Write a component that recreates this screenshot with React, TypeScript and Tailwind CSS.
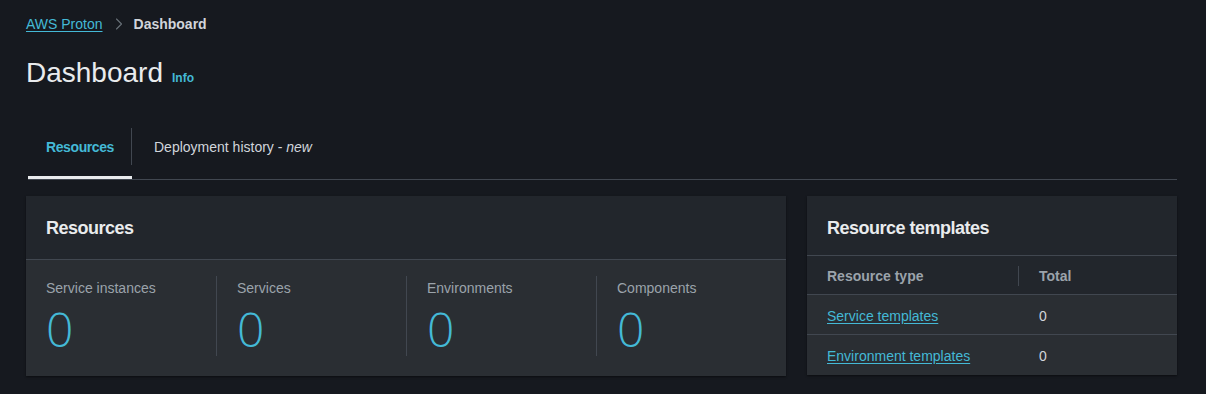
import { ChevronRight } from "lucide-react";

const stats = [
  { label: "Service instances", value: 0 },
  { label: "Services", value: 0 },
  { label: "Environments", value: 0 },
  { label: "Components", value: 0 },
];

const templates = [
  { name: "Service templates", total: 0 },
  { name: "Environment templates", total: 0 },
];

export default function App() {
  return (
    <main
      className="min-h-screen bg-[#16191f] text-[#d1d5db] pl-[26px] pr-[29px] pt-[14px]"
      style={{ fontFamily: '"Liberation Sans", Arial, sans-serif' }}
    >
      {/* breadcrumb */}
      <nav className="flex items-center h-5 text-sm">
        <a href="#" className="text-[#44b9d6] underline underline-offset-2">
          AWS Proton
        </a>
        <ChevronRight className="w-5 h-5 ml-[6px] mr-[5px] text-[#687078]" strokeWidth={1.3} />
        <span className="font-bold text-[#d1d5db]">Dashboard</span>
      </nav>

      {/* title */}
      <div className="flex items-baseline mt-[21px] h-[36px]">
        <h1 className="text-[28px] leading-[36px] text-[#e9ebed]">Dashboard</h1>
        <span className="ml-[9px] text-xs font-bold text-[#44b9d6]">Info</span>
      </div>

      {/* tabs */}
      <div className="mt-[27px] ml-[2px] flex border-b border-[#414750]">
        <div className="relative w-[104px] h-[61px] pb-[3px] flex items-center justify-center">
          <span className="text-sm font-bold tracking-[-0.4px] text-[#44b9d6]">Resources</span>
          <span className="absolute left-0 right-0 bottom-0 h-[3px] bg-[#e9ebed]" />
          <span className="absolute right-0 top-[10px] h-[37px] w-px bg-[#414750]" />
        </div>
        <div className="h-[61px] pb-[3px] pl-[22px] flex items-center">
          <span className="text-sm text-[#d1d5db]">
            Deployment history - <i>new</i>
          </span>
        </div>
      </div>

      {/* cards */}
      <div className="mt-4 grid grid-cols-[760px_370px] gap-[21px]">
        <section className="bg-[#2a2e33] shadow-[0_1px_2px_rgba(0,0,0,0.5)]">
          <div className="h-[64px] bg-[#22262c] flex items-center px-5 border-b border-[#414750]">
            <h2 className="text-lg font-bold tracking-[-0.5px] text-[#e9ebed] pt-[1px]">Resources</h2>
          </div>
          <div className="grid grid-cols-4 pt-4 pb-5">
            {stats.map((s, i) => (
              <div
                key={s.label}
                className={`h-[80px] pl-5 ${i > 0 ? "border-l border-[#414750]" : ""}`}
              >
                <div className="text-sm leading-5 text-[#9ba3ab] pt-[2px]">{s.label}</div>
                <div
                  className="mt-[3px] text-[48px] leading-[56px] font-light text-[#44b9d6]"
                  style={{ fontFamily: '"Open Sans", sans-serif' }}
                >
                  {s.value}
                </div>
              </div>
            ))}
          </div>
        </section>

        <section className="self-start bg-[#2a2e33] shadow-[0_1px_2px_rgba(0,0,0,0.5)]">
          <div className="h-[60px] bg-[#22262c] flex items-center px-5 border-b border-[#414750]">
            <h2 className="text-lg font-bold tracking-[-0.5px] text-[#e9ebed] pt-[4px]">Resource templates</h2>
          </div>
          <div className="grid grid-cols-[212px_1fr] h-[39px] pt-[2px] items-center bg-[#22262c] border-b border-[#414750] text-sm font-bold text-[#9ba3ab]">
            <div className="pl-5 h-5 flex items-center border-r border-[#414750]">Resource type</div>
            <div className="pl-5">Total</div>
          </div>
          {templates.map((t, i) => (
            <div
              key={t.name}
              className={`grid grid-cols-[212px_1fr] h-[40px] pt-[2px] items-center text-sm ${
                i < templates.length - 1 ? "border-b border-[#414750]" : ""
              }`}
            >
              <a href="#" className="pl-5 text-[#44b9d6] underline underline-offset-2">
                {t.name}
              </a>
              <span className="pl-5 text-[#d1d5db]">{t.total}</span>
            </div>
          ))}
        </section>
      </div>
    </main>
  );
}
